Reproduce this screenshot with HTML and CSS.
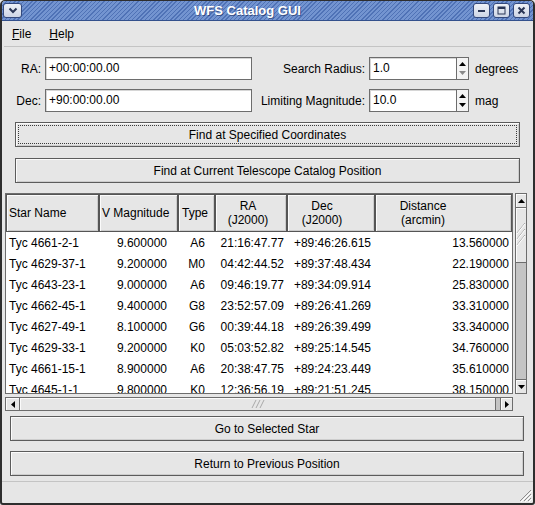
FILE: index.html
```html
<!DOCTYPE html>
<html>
<head>
<meta charset="utf-8">
<title>WFS Catalog GUI</title>
<link rel="stylesheet" href="styles.css">
</head>
<body>
<div class="window">
  <div class="titlebar">
    <div class="tbtn tbtn-menu">
      <svg width="10" height="7" viewBox="0 0 10 7"><path d="M1.5 1.5 L5 5 L8.5 1.5" fill="none" stroke="#2a3656" stroke-width="2"/></svg>
    </div>
    <div class="title">WFS Catalog GUI</div>
    <div class="tbtns">
      <div class="tbtn"><svg width="9" height="9" viewBox="0 0 9 9"><rect x="1" y="4" width="7" height="2" fill="#2a3656"/></svg></div>
      <div class="tbtn"><svg width="9" height="9" viewBox="0 0 9 9"><rect x="1" y="1" width="7" height="7" fill="none" stroke="#2a3656" stroke-width="1"/><rect x="1" y="1" width="7" height="2" fill="#2a3656"/></svg></div>
      <div class="tbtn"><svg width="9" height="9" viewBox="0 0 9 9"><path d="M1.5 1.5 L7.5 7.5 M7.5 1.5 L1.5 7.5" stroke="#2a3656" stroke-width="2"/></svg></div>
    </div>
  </div>

  <div class="client">
    <div class="menubar">
      <span class="menuitem"><u>F</u>ile</span>
      <span class="menuitem"><u>H</u>elp</span>
    </div>

    <div class="form">
      <span class="lbl">RA:</span>
      <div class="entry">+00:00:00.00</div>
      <span class="lbl">Search Radius:</span>
      <div class="spin">
        <div class="spin-text">1.0</div>
        <div class="spin-btns">
          <svg width="7" height="4" viewBox="0 0 7 4"><path d="M0 4 L3.5 0 L7 4Z" fill="#000"/></svg>
          <svg width="7" height="4" viewBox="0 0 7 4"><path d="M0 0 L3.5 4 L7 0Z" fill="#8a8a8a"/></svg>
        </div>
      </div>
      <span class="unit">degrees</span>

      <span class="lbl">Dec:</span>
      <div class="entry">+90:00:00.00</div>
      <span class="lbl">Limiting Magnitude:</span>
      <div class="spin">
        <div class="spin-text">10.0</div>
        <div class="spin-btns">
          <svg width="7" height="4" viewBox="0 0 7 4"><path d="M0 4 L3.5 0 L7 4Z" fill="#000"/></svg>
          <svg width="7" height="4" viewBox="0 0 7 4"><path d="M0 0 L3.5 4 L7 0Z" fill="#000"/></svg>
        </div>
      </div>
      <span class="unit">mag</span>
    </div>

    <div class="btn btn-top focus">Find at Specified Coordinates</div>
    <div class="btn btn-top2">Find at Current Telescope Catalog Position</div>

    <div class="scrolled">
      <div class="view">
        <table class="grid">
          <colgroup>
            <col class="w-name"><col class="w-vmag"><col class="w-type"><col class="w-ra"><col class="w-dec"><col class="w-dist">
          </colgroup>
          <thead>
            <tr>
              <th class="h-name">Star Name</th>
              <th class="h-vmag">V Magnitude</th>
              <th class="h-type">Type</th>
              <th class="h-ra"><span class="two">RA<br>(J2000)</span></th>
              <th class="h-dec"><span class="two">Dec<br>(J2000)</span></th>
              <th class="h-dist"><span class="two">Distance<br>(arcmin)</span></th>
            </tr>
          </thead>
          <tbody>
            <tr><td class="c-name">Tyc 4661-2-1</td><td class="c-vmag">9.600000</td><td class="c-type">A6</td><td class="c-ra">21:16:47.77</td><td class="c-dec">+89:46:26.615</td><td class="c-dist">13.560000</td></tr>
            <tr><td class="c-name">Tyc 4629-37-1</td><td class="c-vmag">9.200000</td><td class="c-type">M0</td><td class="c-ra">04:42:44.52</td><td class="c-dec">+89:37:48.434</td><td class="c-dist">22.190000</td></tr>
            <tr><td class="c-name">Tyc 4643-23-1</td><td class="c-vmag">9.000000</td><td class="c-type">A6</td><td class="c-ra">09:46:19.77</td><td class="c-dec">+89:34:09.914</td><td class="c-dist">25.830000</td></tr>
            <tr><td class="c-name">Tyc 4662-45-1</td><td class="c-vmag">9.400000</td><td class="c-type">G8</td><td class="c-ra">23:52:57.09</td><td class="c-dec">+89:26:41.269</td><td class="c-dist">33.310000</td></tr>
            <tr><td class="c-name">Tyc 4627-49-1</td><td class="c-vmag">8.100000</td><td class="c-type">G6</td><td class="c-ra">00:39:44.18</td><td class="c-dec">+89:26:39.499</td><td class="c-dist">33.340000</td></tr>
            <tr><td class="c-name">Tyc 4629-33-1</td><td class="c-vmag">9.200000</td><td class="c-type">K0</td><td class="c-ra">05:03:52.82</td><td class="c-dec">+89:25:14.545</td><td class="c-dist">34.760000</td></tr>
            <tr><td class="c-name">Tyc 4661-15-1</td><td class="c-vmag">8.900000</td><td class="c-type">A6</td><td class="c-ra">20:38:47.75</td><td class="c-dec">+89:24:23.449</td><td class="c-dist">35.610000</td></tr>
            <tr><td class="c-name">Tyc 4645-1-1</td><td class="c-vmag">9.800000</td><td class="c-type">K0</td><td class="c-ra">12:36:56.19</td><td class="c-dec">+89:21:51.245</td><td class="c-dist">38.150000</td></tr>
          </tbody>
        </table>
      </div>

      <div class="vscroll">
        <div class="sb-arrow"><svg width="7" height="4" viewBox="0 0 7 4"><path d="M0 4 L3.5 0 L7 4Z" fill="#000"/></svg></div>
        <div class="vthumb">
          <svg width="10" height="26" viewBox="0 0 10 26"><path d="M1 11 L9 1 M1 17 L9 7 M1 23 L9 13" stroke="#a8a8a8" stroke-width="1" fill="none"/><path d="M1 12 L9 2 M1 18 L9 8 M1 24 L9 14" stroke="#ffffff" stroke-width="1" fill="none"/></svg>
        </div>
        <div class="vtrough"></div>
        <div class="sb-arrow"><svg width="7" height="4" viewBox="0 0 7 4"><path d="M0 0 L3.5 4 L7 0Z" fill="#000"/></svg></div>
      </div>

      <div class="hscroll">
        <div class="sb-harrow"><svg width="4" height="7" viewBox="0 0 4 7"><path d="M4 0 L0 3.5 L4 7Z" fill="#000"/></svg></div>
        <div class="hthumb">
          <svg width="14" height="8" viewBox="0 0 14 8"><path d="M1 8 L5 0 M5 8 L9 0 M9 8 L13 0" stroke="#a8a8a8" stroke-width="1" fill="none"/></svg>
        </div>
        <div class="sb-harrow right"><svg width="4" height="7" viewBox="0 0 4 7"><path d="M0 0 L4 3.5 L0 7Z" fill="#000"/></svg></div>
      </div>
    </div>

    <div class="btn btn-bottom">Go to Selected Star</div>
    <div class="btn btn-bottom2">Return to Previous Position</div>

    <div class="statusbar">
      <svg class="grip" width="14" height="14" viewBox="0 0 14 14">
        <path d="M13 2 L2 13 M13 6 L6 13 M13 10 L10 13" stroke="#8c8c8c" stroke-width="1" fill="none"/>
        <path d="M14 3 L3 14 M14 7 L7 14 M14 11 L11 14" stroke="#ffffff" stroke-width="1" fill="none"/>
      </svg>
    </div>
  </div>
</div>
</body>
</html>
```

FILE: styles.css
```css
* { box-sizing: border-box; }

html, body {
  margin: 0;
  padding: 0;
}

body {
  width: 535px;
  height: 505px;
  overflow: hidden;
  background: #e6e6e6;
  font-family: "Liberation Sans", Arial, sans-serif;
  font-size: 12px;
  color: #000;
}

.window {
  width: 535px;
  height: 505px;
  border: 2px solid #2e2e2e;
  border-top-width: 1px;
  border-radius: 5px 5px 3px 3px;
  background: #e6e6e6;
  display: flex;
  flex-direction: column;
  overflow: hidden;
}

/* ---------- title bar ---------- */
.titlebar {
  flex: none;
  height: 20px;
  display: flex;
  align-items: center;
  padding: 0 3px 0 1px;
  background: repeating-linear-gradient(135deg, #4f72b6 0px, #4f72b6 1px, #7394d0 1px, #7394d0 3px);
  border-bottom: 1px solid #33508c;
}

.title {
  flex: 1;
  text-align: center;
  color: #fff;
  font-weight: bold;
  font-size: 13px;
  text-shadow: 1px 1px 0 rgba(20, 35, 80, 0.55);
}

.tbtns {
  display: flex;
  gap: 3px;
}

.tbtn {
  width: 17px;
  height: 15px;
  border: 1px solid #34497c;
  border-radius: 3px;
  background: linear-gradient(#eef1f7, #cdd5e5);
  display: flex;
  align-items: center;
  justify-content: center;
}

.tbtn-menu {
  width: 19px;
}

/* ---------- client ---------- */
.client {
  flex: 1;
  display: flex;
  flex-direction: column;
}

.menubar {
  flex: none;
  height: 26px;
  display: flex;
  align-items: center;
  gap: 18px;
  padding-left: 10px;
  border-bottom: 1px solid #c4c4c4;
  margin: 0 2px;
}
.menubar .menuitem:first-child { margin-left: -2px; }

.form {
  display: grid;
  grid-template-columns: 35px 207px 109px 100px auto;
  grid-auto-rows: 23px;
  column-gap: 4px;
  row-gap: 9px;
  align-items: center;
  padding: 10px 0 0 4px;
}

.lbl {
  text-align: right;
  white-space: nowrap;
}

.entry {
  height: 23px;
  line-height: 21px;
  border: 1px solid #6d6d6d;
  background: #fff;
  padding: 0 3px;
  box-shadow: inset 1px 1px 0 #d6d6d6;
}

.spin {
  display: flex;
  height: 23px;
}

.spin-text {
  flex: 1;
  line-height: 21px;
  border: 1px solid #6d6d6d;
  background: #fff;
  padding: 0 3px;
  box-shadow: inset 1px 1px 0 #d6d6d6;
}

.spin-btns {
  width: 12px;
  border: 1px solid #6d6d6d;
  border-left: none;
  background: #f4f4f4;
  display: flex;
  flex-direction: column;
  align-items: center;
  justify-content: space-around;
  padding: 2px 0;
}

.unit {
  padding-left: 2px;
}

/* ---------- buttons ---------- */
.btn {
  position: relative;
  flex: none;
  height: 25px;
  display: flex;
  align-items: center;
  justify-content: center;
  border: 1px solid #5c5c5c;
  background: #e6e6e6;
  box-shadow: inset 1px 1px 0 #fbfbfb, inset -1px -1px 0 #cdcdcd;
  white-space: nowrap;
}

.btn-top { margin: 10px 13px 0 13px; }
.btn-top2 { margin: 11px 13px 0 13px; }
.btn-bottom { margin: 5px 9px 0 8px; }
.btn-bottom2 { margin: 10px 9px 0 8px; }

.btn.focus::after {
  content: "";
  position: absolute;
  top: 2px;
  left: 2px;
  right: 2px;
  bottom: 2px;
  border: 1px dotted #3a3a3a;
}

/* ---------- scrolled table ---------- */
.scrolled {
  flex: none;
  margin: 10px 6px 0 3px;
  display: grid;
  grid-template-columns: 508px 12px;
  grid-template-rows: 201px 14px;
  column-gap: 2px;
  row-gap: 3px;
}

.view {
  border: 1px solid #6d6d6d;
  background: #fff;
  overflow: hidden;
}

.grid {
  table-layout: fixed;
  border-collapse: separate;
  border-spacing: 0;
  width: 506px;
}

.w-name { width: 93px; }
.w-vmag { width: 79px; }
.w-type { width: 37px; }
.w-ra { width: 72px; }
.w-dec { width: 88px; }
.w-dist { width: 137px; }

.grid th {
  height: 38px;
  padding: 0;
  font-weight: normal;
  text-align: left;
  white-space: nowrap;
  background: #e6e6e6;
  border: 1px solid #555;
  box-shadow: inset 1px 1px 0 #fbfbfb, inset -1px -1px 0 #cbcbcb;
  line-height: 14px;
  overflow: hidden;
}

.two {
  display: inline-block;
  text-align: center;
}

.h-name { padding-left: 2px !important; }
.h-vmag { padding-left: 2px !important; }
.h-type { padding-left: 3px !important; }
.h-ra { text-align: center !important; padding-right: 6px !important; }
.h-dec { text-align: center !important; padding-right: 18px !important; }
.h-dist { text-align: center !important; padding-right: 41px !important; }

.grid td {
  height: 21px;
  padding: 0;
  white-space: nowrap;
  overflow: hidden;
}

.c-name { padding-left: 3px !important; }
.c-vmag { text-align: right; padding-right: 11px !important; }
.c-type { text-align: right; padding-right: 10px !important; }
.c-ra { text-align: right; padding-right: 3px !important; }
.c-dec { text-align: right; padding-right: 4px !important; }
.c-dist { text-align: right; padding-right: 3px !important; }

/* scrollbars */
.vscroll {
  border: 1px solid #6d6d6d;
  background: #c4c4c4;
  display: flex;
  flex-direction: column;
}

.sb-arrow {
  flex: none;
  height: 14px;
  background: #e6e6e6;
  display: flex;
  align-items: center;
  justify-content: center;
  box-shadow: inset 1px 1px 0 #fbfbfb;
}
.sb-arrow:first-child { border-bottom: 1px solid #6d6d6d; }
.sb-arrow:last-child { border-top: 1px solid #6d6d6d; }

.vthumb {
  flex: none;
  height: 55px;
  background: #e6e6e6;
  border-bottom: 1px solid #6d6d6d;
  box-shadow: inset 1px 1px 0 #fbfbfb;
  display: flex;
  align-items: center;
  justify-content: center;
}

.vtrough { flex: 1; }

.hscroll {
  grid-column: 1;
  border: 1px solid #6d6d6d;
  background: #c4c4c4;
  display: flex;
}

.sb-harrow {
  flex: none;
  width: 14px;
  background: #e6e6e6;
  border-right: 1px solid #6d6d6d;
  box-shadow: inset 1px 1px 0 #fbfbfb;
  display: flex;
  align-items: center;
  justify-content: center;
}
.sb-harrow.right {
  width: 12px;
  border-right: none;
  border-left: 1px solid #6d6d6d;
}

.hthumb {
  flex: 1;
  margin-right: 4px;
  background: #e6e6e6;
  border-right: 1px solid #6d6d6d;
  box-shadow: inset 1px 1px 0 #fbfbfb;
  display: flex;
  align-items: center;
  justify-content: center;
}

/* status area */
.statusbar {
  flex: 1;
  margin-top: 5px;
  border-top: 1px solid #c4c4c4;
  display: flex;
  justify-content: flex-end;
  align-items: flex-end;
  padding: 0 1px 1px 0;
}
```
